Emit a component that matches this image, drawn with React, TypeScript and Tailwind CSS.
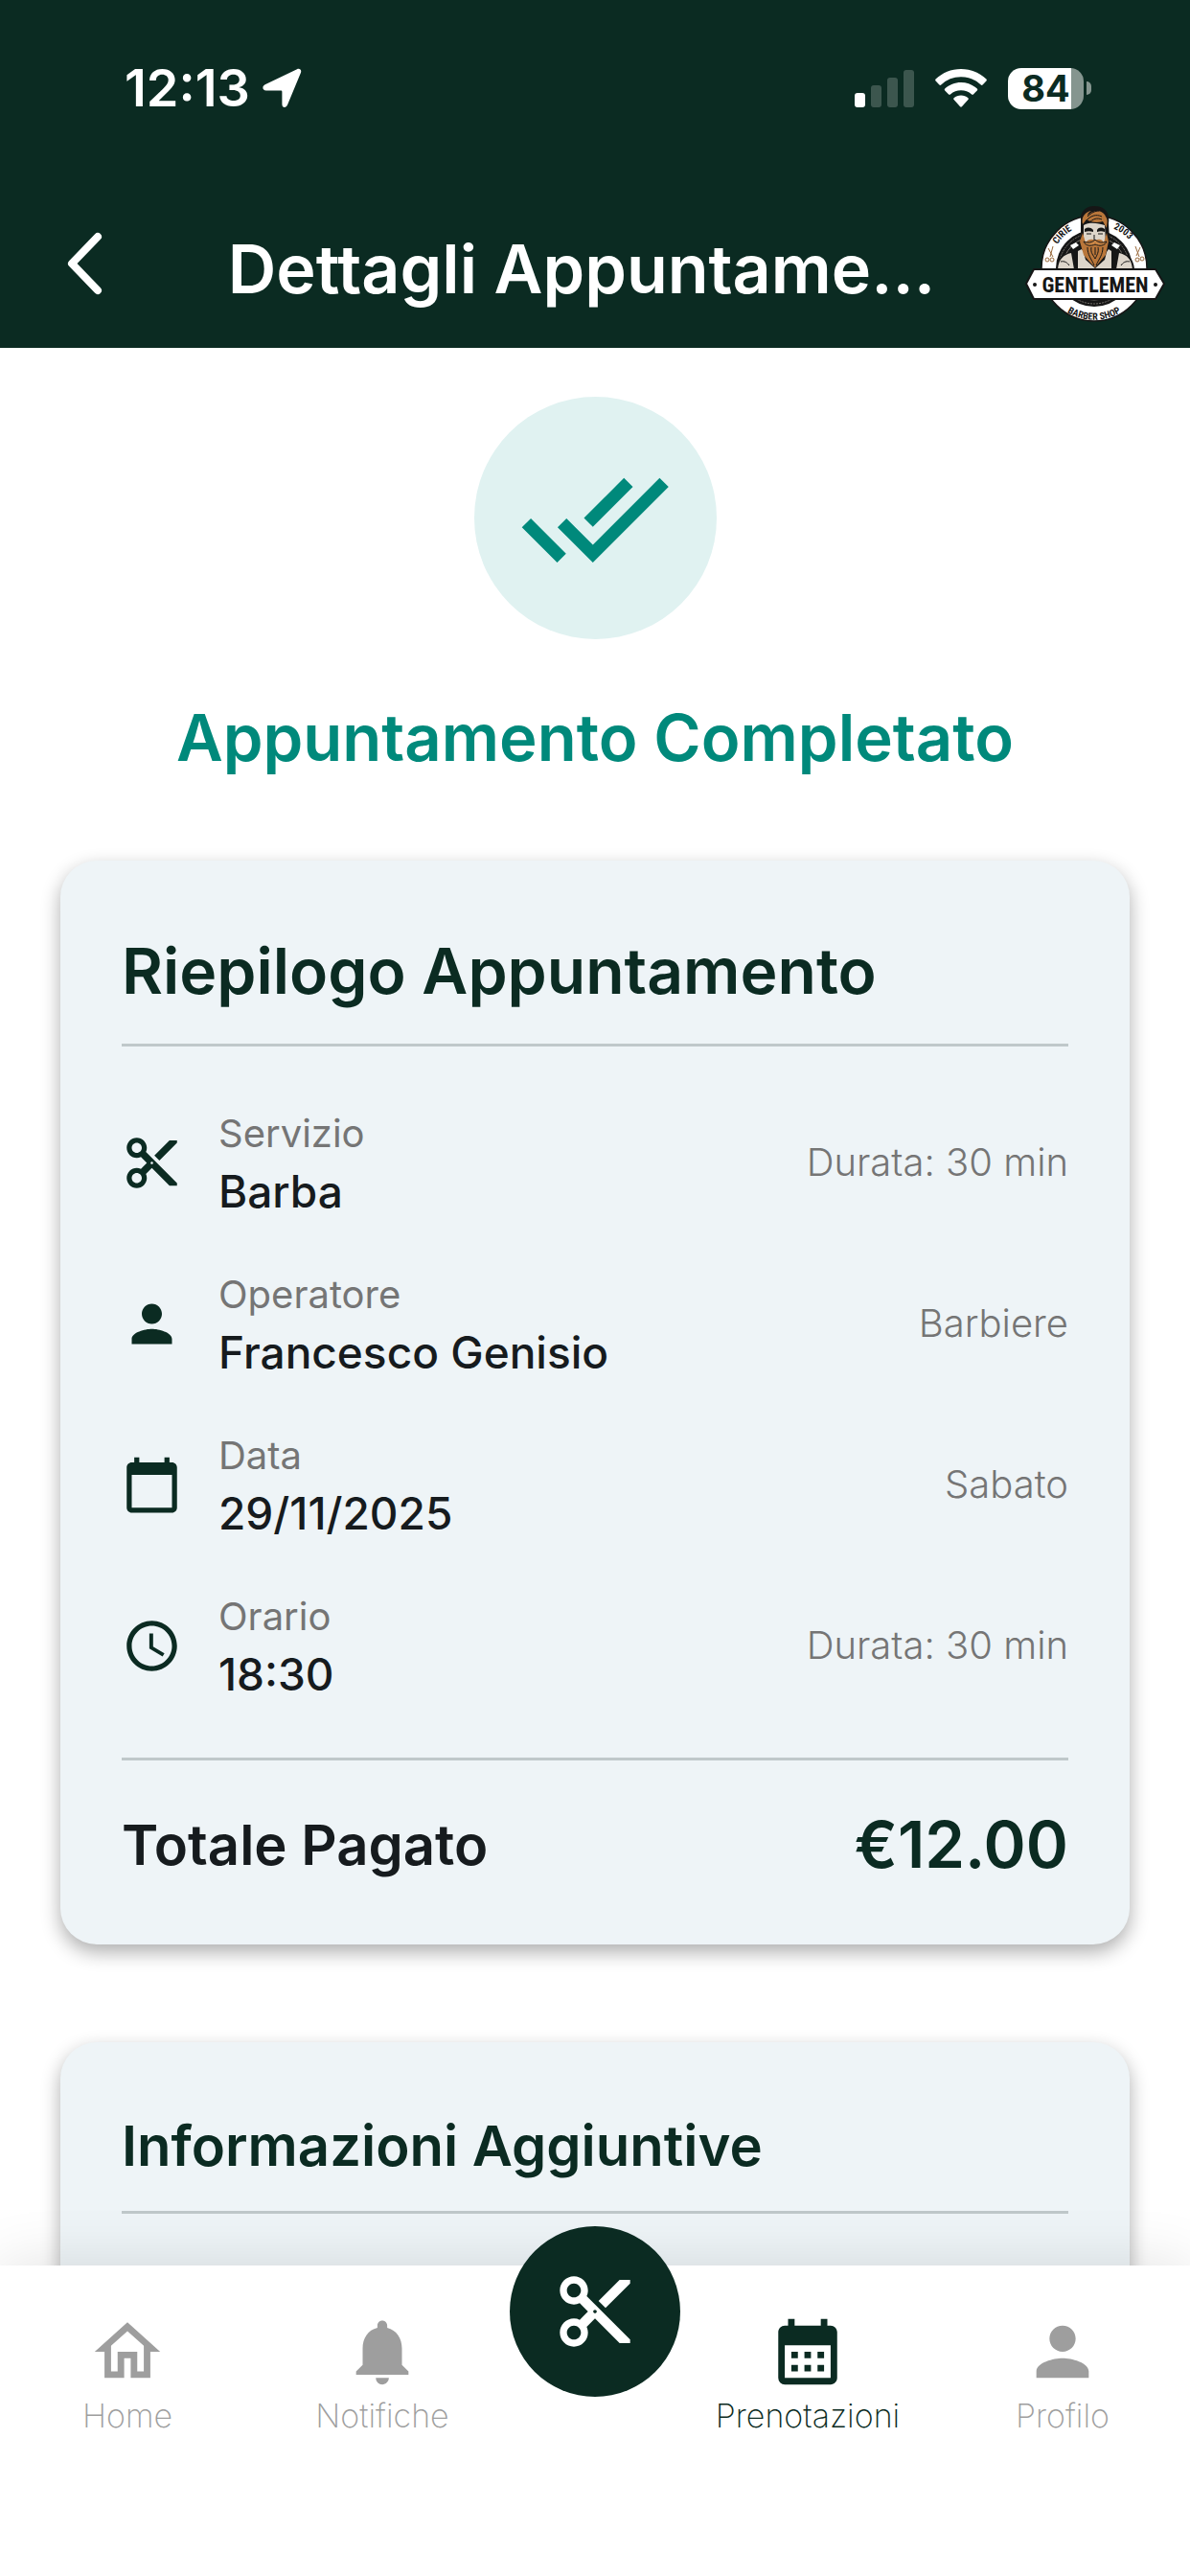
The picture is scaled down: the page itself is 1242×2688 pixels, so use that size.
import type { IconType } from "react-icons";
import {
  MdCalendarMonth,
  MdCalendarToday,
  MdContentCut,
  MdDoneAll,
  MdNotifications,
  MdOutlineHome,
  MdPerson,
  MdSchedule,
} from "react-icons/md";

type Detail = {
  icon: IconType;
  label: string;
  value: string;
  note: string;
};

const details: Detail[] = [
  { icon: MdContentCut, label: "Servizio", value: "Barba", note: "Durata: 30 min" },
  { icon: MdPerson, label: "Operatore", value: "Francesco Genisio", note: "Barbiere" },
  { icon: MdCalendarToday, label: "Data", value: "29/11/2025", note: "Sabato" },
  { icon: MdSchedule, label: "Orario", value: "18:30", note: "Durata: 30 min" },
];

const Logo = () => (
  <svg viewBox="10 14 146 122" className="w-[146px] h-[122px]" role="img" aria-label="Gentlemen Barber Shop">
    <defs>
      <path id="logo-left" d="M43.5 55 A46 46 0 0 1 72 35" />
      <path id="logo-right" d="M102 38.5 A46 46 0 0 1 128 66" />
      <path id="logo-bottom" d="M36 108 A54 54 0 0 0 128 108" />
    </defs>
    <circle cx="82" cy="80" r="55" fill="#ffffff" stroke="#161616" strokeWidth="1.5" />
    <circle cx="82" cy="80" r="40" fill="#161616" />
    <circle cx="82" cy="80" r="37" fill="none" stroke="#77736d" strokeWidth="1" strokeDasharray="2 1" />
    <circle cx="82" cy="80" r="33" fill="none" stroke="#77736d" strokeWidth="1" />
    {/* shoulders, shirt and braces */}
    <path d="M43 81c0-12 6-16 15-18l9-5h32l9 5c9 2 15 6 16 18z" fill="#161616" />
    <path d="M44 81c1-11 6-15 14-17l3 17zM122 81c-1-11-6-15-14-17l-3 17z" fill="#ddd5ca" />
    <path d="M65 62l4-2 10 14h8l10-14 3 2v19H65z" fill="#ddd5ca" />
    <path d="M47 73c4-1 7 1 9 4M119 73c-4-1-7 1-9 4" fill="none" stroke="#161616" strokeWidth="1" />
    <path d="M57 56l6-3 3 3-6 4zM109 56l-6-3-3 3 6 4z" fill="#ffffff" />
    {/* head */}
    <path d="M68 28c0-9 7-13 14-13 9 0 17 5 15 18l1 18-5 20-10 9-10-9-5-19z" fill="#161616" />
    <path d="M71 35c6-4 16-2 22 0l1 19-11 6-12-6z" fill="#ddd5ca" />
    <path d="M72 39c3-2 6-2 9 1v2c-3-1-6-1-9 0zM93 39c-3-2-6-2-8 1v2c3-1 5-1 8 0z" fill="#161616" />
    <path d="M74 44h5M86 44h5M82 45v6" stroke="#161616" strokeWidth="1" />
    <path d="M70 34c-2-8 3-13 9-14-3 2-4 3-4 5 5-6 16-7 19 1 3 4 1 8 1 12l-4-7c-6 2-12 1-17-2z" fill="#b9763a" />
    <path d="M73 31c5-6 11-8 17-5M76 33c5-5 9-6 14-4M75 26c4-4 8-6 12-6" fill="none" stroke="#161616" strokeWidth="1" />
    <path d="M70 43l3 10c3-4 7-4 10-2 3-2 7-2 9 2l3-10 2 9-3 14-6 7-5 6-6-6-6-7-4-14z" fill="#b9763a" />
    <path d="M71 52c5 2 9 1 12-2 3 3 7 4 12 2-2 5-8 5-12 3-4 2-10 2-12-3z" fill="#c98545" stroke="#161616" strokeWidth="1" />
    <path d="M75 58c0 8 4 12 7 19M91 58c0 8-4 12-7 19M79 58c-1 6 2 8 4 12 2-4 4-7 3-12M83 58v8" fill="none" stroke="#161616" strokeWidth="1" />
    {/* small scissors */}
    <path d="M39 57l-3 11M34 59l5 9M125 57l4 11M130 58l-4 9" stroke="#9a6a3c" strokeWidth="1" />
    <g fill="none" stroke="#9a6a3c" strokeWidth="1">
      <circle cx="33" cy="71" r="2" />
      <circle cx="38" cy="71" r="2" />
      <circle cx="127" cy="71" r="2" />
      <circle cx="132" cy="70" r="2" />
    </g>
    {/* banner */}
    <path d="M19 81h127l9 15-9 16H19l-8-16z" fill="#ffffff" stroke="#161616" strokeWidth="2" strokeLinejoin="round" />
    <circle cx="20" cy="97" r="2" fill="#161616" />
    <circle cx="146" cy="97" r="2" fill="#161616" />
    <g fill="#161616" fontFamily="'Roboto Condensed', 'Open Sans Condensed', Roboto, sans-serif" fontWeight="700">
      <text x="83" y="105" textAnchor="middle" fontSize="22">
        GENTLEMEN
      </text>
      <g fontSize="10">
        <text>
          <textPath href="#logo-left">CIRIE</textPath>
        </text>
        <text>
          <textPath href="#logo-right">2003</textPath>
        </text>
        <text textAnchor="middle">
          <textPath href="#logo-bottom" startOffset="50%">BARBER SHOP</textPath>
        </text>
      </g>
    </g>
  </svg>
);

const StatusBar = () => (
  <div className="flex items-center justify-between pt-[60px] pl-[130px] pr-[103px]">
    <div className="flex items-center gap-3 text-white">
      <span className="text-[54px] leading-[64px] font-semibold">12:13</span>
      <svg viewBox="0 0 42 42" className="w-[42px] h-[42px]" fill="currentColor">
        <path d="M37 1.2c2.7-1.2 5 .9 4 3.6L27 38.5c-1.5 3.6-5.6 3-5.6-.8V25c0-1-.4-1.400-1.400-1.400H4.800c-4 0-4.600-4.700-1.200-6.300z" />
      </svg>
    </div>
    <div className="flex items-center gap-[22px]">
      <svg viewBox="0 0 62 40" className="w-[62px] h-[40px]" fill="#ffffff">
        <rect x="0" y="25" width="11" height="15" rx="3" />
        <g opacity="0.2">
          <rect x="17" y="17" width="11" height="23" rx="3" />
          <rect x="34" y="9" width="11" height="31" rx="3" />
          <rect x="51" y="1" width="11" height="39" rx="3" />
        </g>
      </svg>
      <svg viewBox="0 0 54 40" className="w-[54px] h-[40px]" fill="#ffffff">
        <path d="M27 0C37.2 0 46.6 4 53.4 10.6c.6.6.6 1.300 0 1.900l-3.800 4c-.6.5-1.200.5-1.800 0A30 30 0 0 0 27 8.300 30 30 0 0 0 6.200 16.500c-.6.5-1.200.5-1.800 0l-3.800-4c-.6-.6-.6-1.300 0-1.900C7.400 4 16.800 0 27 0z" />
        <path d="M27 14c6.400 0 12.300 2.500 16.800 6.500.6.6.6 1.300 0 1.900l-3.900 4c-.5.5-1.200.5-1.800 0A17 17 0 0 0 27 22.200a17 17 0 0 0-11.100 4.200c-.6.5-1.300.5-1.800 0l-3.900-4c-.6-.6-.6-1.300 0-1.900C14.700 16.500 20.600 14 27 14z" />
        <path d="M27 27.600c2.800 0 5.400 1 7.400 2.700.6.5.6 1.200 0 1.800l-6.500 7.100c-.6.6-1.200.6-1.800 0l-6.500-7.100c-.6-.6-.6-1.300 0-1.800 2-1.700 4.600-2.700 7.400-2.700z" />
      </svg>
      <div className="flex items-center gap-[3px]">
        <div className="flex items-center justify-center w-[79px] h-[43px] rounded-[14px] bg-gradient-to-r from-white from-84% to-[#85958f] to-84%">
          <span className="text-[38px] leading-none font-bold text-[#0b2b22]">84</span>
        </div>
        <div className="w-[5px] h-[14px] rounded-r-full bg-[#85958f]" />
      </div>
    </div>
  </div>
);

const AppBar = () => (
  <div className="flex items-center pl-[60px] pr-[26px] mt-[90px]">
    <button type="button" aria-label="Indietro" className="w-[60px]">
      <svg viewBox="0 0 60 76" className="w-[60px] h-[76px]" fill="none" stroke="#ffffff" strokeWidth="8" strokeLinecap="round" strokeLinejoin="round">
        <path d="M42 10L15 38l27 28" />
      </svg>
    </button>
    <h1 className="flex-1 pl-6 pt-3 text-center text-[70px] leading-[80px] font-semibold text-white whitespace-nowrap">
      Dettagli Appuntame…
    </h1>
    <Logo />
  </div>
);

const DetailRow = ({ icon: Icon, label, value, note }: Detail) => (
  <li className="flex items-center">
    <Icon className="text-[63px] text-[#0b2b22]" />
    <div className="flex flex-col flex-1 gap-1 pl-[38px]">
      <span className="text-[40px] leading-[56px] text-[#757575]">{label}</span>
      <span className="text-[46px] leading-[56px] font-medium text-[#161b1e]">{value}</span>
    </div>
    <span className="text-[40px] leading-[56px] font-light text-[#757575]">{note}</span>
  </li>
);

type NavItemProps = {
  icon: IconType;
  label: string;
  active?: boolean;
};

const NavItem = ({ icon: Icon, label, active }: NavItemProps) => (
  <a
    href="#"
    aria-current={active ? "page" : undefined}
    className={`flex flex-col flex-1 items-center pt-[49px] ${active ? "text-[#0b2b22]" : "text-[#9e9e9e]"}`}
  >
    <Icon className="text-[82px]" />
    <span className="mt-1 text-[34px] leading-[44px] font-extralight">{label}</span>
  </a>
);

const BottomNav = () => (
  <nav className="relative z-10 flex h-[324px] bg-white shadow-[0_0_60px_rgba(0,0,0,0.12)]">
    <NavItem icon={MdOutlineHome} label="Home" />
    <NavItem icon={MdNotifications} label="Notifiche" />
    <button
      type="button"
      aria-label="Prenota"
      className="flex items-center justify-center w-[178px] h-[178px] -mt-[41px] rounded-full bg-[#0b2b22] text-white"
    >
      <MdContentCut className="text-[88px]" />
    </button>
    <NavItem icon={MdCalendarMonth} label="Prenotazioni" active />
    <NavItem icon={MdPerson} label="Profilo" />
  </nav>
);

const App = () => {
  return (
    <div className="flex flex-col h-screen overflow-hidden bg-white font-['Inter',sans-serif]">
      <header className="h-[363px] shrink-0 bg-[#0b2b22]">
        <StatusBar />
        <AppBar />
      </header>
      <main className="flex flex-col flex-1 min-h-0 px-[63px] pt-[51px] overflow-hidden">
        <div className="flex flex-col items-center">
          <div className="flex items-center justify-center w-[253px] h-[253px] rounded-full bg-[#e0f2f1]">
            <MdDoneAll className="text-[158px] text-[#00897b]" />
          </div>
          <h2 className="mt-[63px] text-[67px] leading-[80px] font-semibold text-[#00897b]">
            Appuntamento Completato
          </h2>
        </div>

        <section className="mt-[88px] px-16 pt-[75px] pb-[62px] rounded-[38px] bg-[#eef4f7] shadow-[0_8px_20px_rgba(0,0,0,0.32)]">
          <h3 className="pb-[36px] border-b-[3px] border-[#bfc8ca] text-[66px] leading-[80px] font-semibold text-[#0b2b22]">
            Riepilogo Appuntamento
          </h3>
          <ul className="flex flex-col gap-[52px] pt-[63px] pb-[59px]">
            {details.map((detail) => (
              <DetailRow key={detail.label} {...detail} />
            ))}
          </ul>
          <div className="flex items-center justify-between pt-[46px] border-t-[3px] border-[#bfc8ca] font-semibold">
            <span className="text-[58px] leading-[84px] text-[#161b1e]">Totale Pagato</span>
            <span className="text-[67px] leading-[84px] text-[#0b2b22]">€12.00</span>
          </div>
        </section>

        <section className="flex-1 shrink-0 mt-[102px] px-16 pt-[68px] pb-[120px] rounded-[38px] bg-[#eef4f7] shadow-[0_8px_20px_rgba(0,0,0,0.32)]">
          <h3 className="pb-[28px] border-b-[3px] border-[#bfc8ca] text-[58px] leading-[80px] font-semibold text-[#0b2b22]">
            Informazioni Aggiuntive
          </h3>
        </section>
      </main>
      <BottomNav />
    </div>
  );
};

export default App;
